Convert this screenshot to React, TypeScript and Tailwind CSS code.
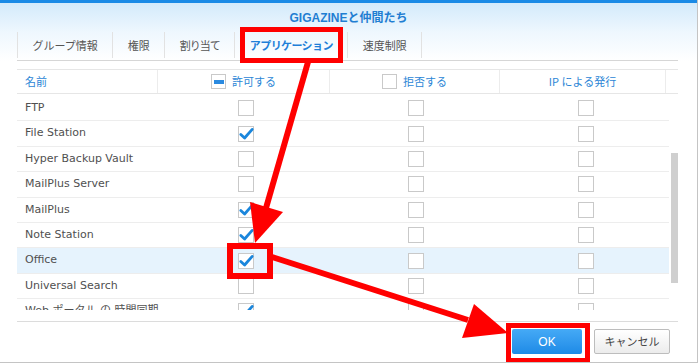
import React from "react";

type Row = {
  name: string;
  allow: boolean;
  selected?: boolean;
};

const rows: Row[] = [
  { name: "FTP", allow: false },
  { name: "File Station", allow: true },
  { name: "Hyper Backup Vault", allow: false },
  { name: "MailPlus Server", allow: false },
  { name: "MailPlus", allow: true },
  { name: "Note Station", allow: true },
  { name: "Office", allow: true, selected: true },
  { name: "Universal Search", allow: false },
  { name: "Web ポータル の 時間同期", allow: true },
];

const tabs = [
  { label: "グループ情報", tracking: "" },
  { label: "権限", tracking: "" },
  { label: "割り当て", tracking: "tracking-[-1px]" },
  { label: "アプリケーション", tracking: "tracking-[-0.6px]" },
  { label: "速度制限", tracking: "" },
];

function Checkbox({ checked = false }: { checked?: boolean }) {
  return (
    <div className="relative h-[16px] w-[16px] border border-[#c9c9c9] bg-white">
      {checked && (
        <svg
          viewBox="0 0 16 16"
          className="absolute left-[-1px] top-[-1px] h-[16px] w-[16px] overflow-visible"
        >
          <path
            d="M2.8 8.4 L6.6 12 L14.2 3.4"
            fill="none"
            stroke="#1a86dc"
            strokeWidth="2.8"
            strokeLinecap="round"
            strokeLinejoin="round"
          />
        </svg>
      )}
    </div>
  );
}

function MinusBox() {
  return (
    <div className="flex h-[15px] w-[15px] items-center justify-center border border-[#c9c9c9] bg-white">
      <div className="h-[4px] w-[10px] bg-[#2a8ae0]" />
    </div>
  );
}

export default function App() {
  return (
    <div
      className="relative h-[363px] w-[698px] overflow-hidden border-b border-r border-[#c4c4c4] bg-white"
      style={{ fontFamily: '"DejaVu Sans", "Noto Sans CJK JP", sans-serif' }}
    >
      <div className="h-[3px] bg-[#1a8ae6]" />
      <div className="bg-gradient-to-b from-[#d3eafb] via-[#eef7fe] to-white">
        <div className="flex h-[27px] items-center justify-center pt-[3px] text-[12px] font-bold text-[#1f7ed2]">
          <span style={{ fontFamily: '"Liberation Sans", "Noto Sans CJK JP", sans-serif' }}>
            GIGAZINEと仲間たち
          </span>
        </div>

        <div className="ml-[17px] mr-[19px] flex h-[31px] items-center border-b border-[#d6d6d6]">
          {tabs.map((tab, i) => (
            <div
              key={tab.label}
              className={`flex h-[26px] items-center border-r border-[#e2e2e2] px-[14.5px] text-[11px] ${tab.tracking} ${
                i === 0 ? "border-l" : ""
              } ${i === 3 ? "font-bold text-[#1f7fd8]" : "text-[#555555]"}`}
              style={{ fontFamily: '"Noto Sans CJK JP", sans-serif' }}
            >
              {tab.label}
            </div>
          ))}
        </div>
      </div>

      <div
        className="ml-[17px] mr-[19px] mt-[8px] flex h-[25px] border-y border-[#e6e6e6] text-[11px] text-[#2c86d6]"
        style={{ fontFamily: '"Noto Sans CJK JP", sans-serif' }}
      >
        <div className="flex w-[141px] items-center border-r border-[#ececec] pl-[8px]">名前</div>
        <div className="flex w-[172px] items-center justify-center gap-[6px] border-r border-[#ececec]">
          <MinusBox />
          <span>許可する</span>
        </div>
        <div className="flex w-[170px] items-center justify-center gap-[6px] border-r border-[#ececec]">
          <div className="h-[15px] w-[15px] border border-[#c9c9c9] bg-white" />
          <span>拒否する</span>
        </div>
        <div className="flex w-[166px] items-center justify-center border-r border-[#ececec]">
          IP による発行
        </div>
        <div className="flex-1" />
      </div>

      <div className="ml-[17px] mr-[19px] mt-[2px] flex">
        <div className="h-[214px] w-[655px] overflow-hidden">
          {rows.map((row) => (
            <div
              key={row.name}
              className={`flex h-[25.4px] items-center border-b border-[#ededed] text-[11px] text-[#505050] ${
                row.selected ? "bg-[#e6f3fd]" : ""
              }`}
            >
              <div className="w-[142px] whitespace-nowrap pl-[8px]">{row.name}</div>
              <div className="flex w-[176px] justify-center">
                <Checkbox checked={row.allow} />
              </div>
              <div className="flex w-[165px] justify-center">
                <Checkbox />
              </div>
              <div className="flex w-[172px] justify-center pl-[6px]">
                <Checkbox />
              </div>
            </div>
          ))}
        </div>
        <div className="w-[9px] pl-[2px]">
          <div className="mt-[57px] h-[130px] w-[7px] bg-[#cfcfcf]" />
        </div>
      </div>

      <div className="ml-[17px] mr-[19px] mt-[11px] border-t border-[#dcdcdc]" />

      <div className="flex justify-end gap-[12px] pr-[27px] pt-[7px]">
        <button
          type="button"
          className="h-[25px] w-[70px] rounded-[2px] bg-gradient-to-b from-[#45aaf6] to-[#1c8ae6] text-[12px] text-white"
          style={{ fontFamily: '"Liberation Sans", sans-serif' }}
        >
          OK
        </button>
        <button
          type="button"
          className="h-[25px] w-[76px] rounded-[2px] border border-[#bdbdbd] bg-gradient-to-b from-white to-[#ececec] text-[11px] text-[#444444]"
          style={{ fontFamily: '"Noto Sans CJK JP", sans-serif' }}
        >
          キャンセル
        </button>
      </div>

      <svg
        className="pointer-events-none absolute left-0 top-0 h-[364px] w-[700px]"
        viewBox="0 0 700 364"
      >
        <rect x="242.5" y="29.5" width="98" height="31" fill="none" stroke="#ff0000" strokeWidth="5" />
        <rect x="230" y="246" width="40" height="30" fill="none" stroke="#ff0000" strokeWidth="6" />
        <rect x="508.5" y="325.5" width="79" height="35" fill="none" stroke="#ff0000" strokeWidth="5" />

        <line x1="308" y1="62" x2="266" y2="208" stroke="#ff0000" strokeWidth="6" />
        <polygon points="255,243 250,202 283,212" fill="#ff0000" />

        <line x1="272" y1="257" x2="468" y2="320" stroke="#ff0000" strokeWidth="6" />
        <polygon points="508,333 474,304 462,338" fill="#ff0000" />
      </svg>
    </div>
  );
}
